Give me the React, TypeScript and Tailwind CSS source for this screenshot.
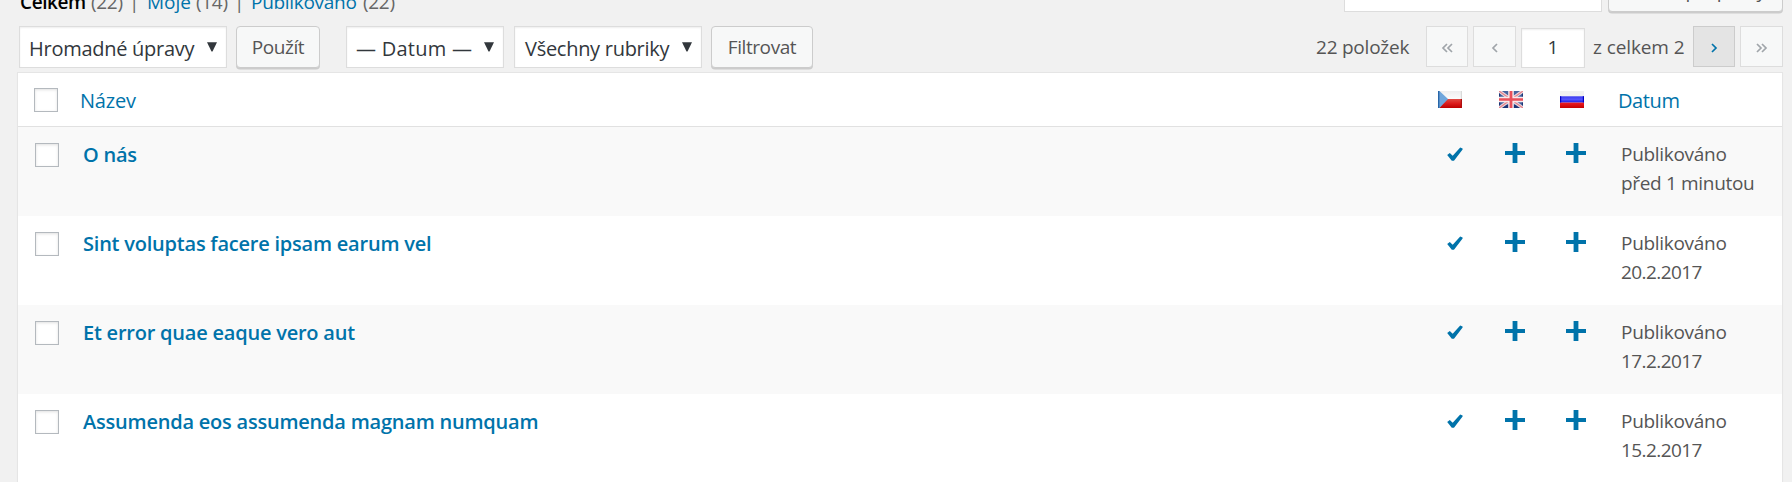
import type { ReactNode } from "react";

const rows = [
  { title: "O nás", date: "před 1 minutou", spacing: "tracking-[-0.33px]" },
  { title: "Sint voluptas facere ipsam earum vel", date: "20.2.2017", spacing: "tracking-[-0.58px]" },
  { title: "Et error quae eaque vero aut", date: "17.2.2017", spacing: "tracking-[-0.58px]" },
  { title: "Assumenda eos assumenda magnam numquam", date: "15.2.2017", spacing: "tracking-[-0.58px]" },
];

function Select({ className, children }: { className: string; children: ReactNode }) {
  return (
    <div className={`flex h-[42px] shrink-0 items-center justify-between border border-[#ddd] bg-white pr-[9px] text-[20px] text-[#32373c] shadow-[inset_0_1px_2px_rgba(0,0,0,0.07)] ${className}`}>
      <span className="whitespace-nowrap pt-[4px] leading-[36px]">{children}</span>
      <svg width="10" height="10" viewBox="0 0 10 10" className="mb-px shrink-0" fill="#32373c">
        <path d="M0 0.3H10L5.5 9.5H4.5Z" />
      </svg>
    </div>
  );
}

function Button({ className, children }: { className: string; children: ReactNode }) {
  return (
    <button className={`flex h-[42px] shrink-0 items-center justify-center whitespace-nowrap rounded-[4px] border border-[#ccc] bg-[#f7f8f8] text-[19px] text-[#555] shadow-[0_1.5px_0_#ccc] ${className}`}>
      {children}
    </button>
  );
}

function PageLink({ className, d, active }: { className: string; d: string; active?: boolean }) {
  return (
    <span className={`flex h-[41px] shrink-0 items-center justify-center border ${active ? "border-[#ccc] bg-[#e4e4e4] text-[#0073aa]" : "border-[#ddd] bg-[#f7f8f8] text-[#a0a5aa]"} ${className}`}>
      <svg width="12" height="12" viewBox="0 0 12 12" className="mt-[3px]" fill="none" stroke="currentColor" strokeWidth="1.7">
        <path d={d} />
      </svg>
    </span>
  );
}

function Checkbox() {
  return <span className="block h-[24px] w-[24px] shrink-0 border border-[#b4b9be] bg-white shadow-[inset_0_1px_3px_rgba(0,0,0,0.12)]" />;
}

function Check() {
  return (
    <svg width="16" height="15" viewBox="0 0 16 15" fill="#0073aa">
      <path d="M0.2 7.9L2.8 6L5.7 8.7L13.2 0.5L15.6 1.6V2.6L7 13.8H4.8Z" />
    </svg>
  );
}

function Plus() {
  return (
    <svg width="20" height="20" viewBox="0 0 20 20" fill="#0073aa">
      <path d="M7.6 0H12.4V8H20V12H12.4V20H7.6V12H0V8H7.6Z" />
    </svg>
  );
}

function CzechFlag() {
  return (
    <svg width="24" height="17" viewBox="0 0 24 17">
      <defs>
        <linearGradient id="cz-w" x2="0" y2="1"><stop stopColor="#eee" /><stop offset="1" stopColor="#fcfcfc" /></linearGradient>
        <linearGradient id="cz-r" x2="0" y2="1"><stop stopColor="#e04a43" /><stop offset="0.5" stopColor="#dc1c1c" /><stop offset="1" stopColor="#bd0000" /></linearGradient>
      </defs>
      <path fill="url(#cz-w)" d="M0 0H24V8H0Z" />
      <path fill="url(#cz-r)" d="M0 8H24V17H0Z" />
      <path fill="#6fa6dc" d="M0 0H1.5L10 8L1.5 17H0Z" />
      <path fill="#2866a8" d="M0 0H1.4V17H0Z" />
      <path fill="#d9dada" d="M22.8 0H24V8H22.8Z" />
      <path fill="#ad1010" d="M22.8 8H24V17H22.8Z" />
    </svg>
  );
}

function BritishFlag() {
  return (
    <svg width="24" height="17" viewBox="0 0 24 17">
      <path fill="#46649f" d="M0 0H24V17H0Z" />
      <path fill="#1c3576" d="M0 14H24V17H0ZM0 0H1.2V17H0ZM22.8 0H24V17H22.8Z" />
      <path stroke="#ead9df" strokeWidth="3.4" d="M0 0L24 17M24 0L0 17" />
      <path stroke="#e5828a" strokeWidth="1.2" d="M0 0L24 17M24 0L0 17" />
      <path fill="#f8eaec" d="M9.2 0H14.8V17H9.2ZM0 5.8H24V11.2H0Z" />
      <path fill="#e9505a" d="M10.6 0H13.4V17H10.6ZM0 7.2H24V9.8H0Z" />
    </svg>
  );
}

function RussianFlag() {
  return (
    <svg width="24" height="17" viewBox="0 0 24 17">
      <defs>
        <linearGradient id="ru-b" x2="0" y2="1"><stop stopColor="#3a3af0" /><stop offset="0.5" stopColor="#5454fb" /><stop offset="1" stopColor="#1818e6" /></linearGradient>
        <linearGradient id="ru-r" x2="0" y2="1"><stop stopColor="#ee1c24" /><stop offset="1" stopColor="#c60000" /></linearGradient>
      </defs>
      <path fill="#f1f1f1" d="M0 0H24V6H0Z" />
      <path fill="url(#ru-b)" d="M0 5.3H24V11.6H0Z" />
      <path fill="url(#ru-r)" d="M0 11.6H24V17H0Z" />
      <path fill="#0000c4" d="M0 5.3H1.2V11.6H0ZM22.8 5.3H24V11.6H22.8Z" />
    </svg>
  );
}

export default function App() {
  return (
    <div className="flex h-[482px] w-[1792px] flex-col overflow-hidden bg-[#f1f1f1] pl-[17px] pr-[9px] font-['Open_Sans','Noto_Sans',sans-serif] text-[19px] text-[#555]">
      <div className="flex h-[26px] shrink-0 justify-between">
        <nav className="-mt-[13px] flex h-[30px] pl-[3px] leading-[30px] tracking-[-0.3px] text-[#666]">
          <span className="w-[71px] font-semibold tracking-[-0.4px] text-black">Celkem</span>
          <span className="w-[38px]">(22)</span>
          <span className="w-[18px]">|</span>
          <span className="w-[49px] tracking-normal text-[#0073aa]">Moje</span>
          <span className="w-[38px]">(14)</span>
          <span className="w-[17px]">|</span>
          <span className="w-[112px] text-[#0073aa]">Publikováno</span>
          <span>(22)</span>
        </nav>
        <div className="flex gap-[6px]">
          <div className="-mt-[30px] h-[42px] w-[258px] border border-[#ddd] bg-white" />
          <Button className="-mt-[30px] w-[175px] tracking-[-0.5px]">Hledat příspěvky</Button>
        </div>
      </div>

      <div className="flex h-[46px] shrink-0 items-start pl-[2px]">
        <Select className="w-[208px] pl-[9px] tracking-[-0.27px]">Hromadné úpravy</Select>
        <Button className="ml-[9px] w-[84px] tracking-[-0.44px]">Použít</Button>
        <Select className="ml-[26px] w-[158px] pl-[9px] tracking-[0.25px]">— Datum —</Select>
        <Select className="ml-[10px] w-[188px] pl-[10px] tracking-[-0.28px]">Všechny rubriky</Select>
        <Button className="ml-[9px] w-[102px] tracking-[-0.42px]">Filtrovat</Button>
        <div className="ml-auto flex">
          <span className="w-[110px] leading-[42px] tracking-[-0.23px]">22 položek</span>
          <PageLink className="w-[42px]" d="M6 2L2 6L6 10M11 2L7 6L11 10" />
          <PageLink className="ml-[5px] w-[43px]" d="M8 2L4 6L8 10" />
          <span className="ml-[5px] mt-[2px] flex h-[40px] w-[64px] items-center justify-center border border-[#ddd] bg-white pb-px text-[#32373c] shadow-[inset_0_1px_2px_rgba(0,0,0,0.07)]">1</span>
          <span className="ml-[8px] w-[100px] leading-[42px] tracking-[-0.1px]">z celkem 2</span>
          <PageLink className="w-[42px]" d="M4 2L8 6L4 10" active />
          <PageLink className="ml-[5px] w-[43px]" d="M1 2L5 6L1 10M6 2L10 6L6 10" />
        </div>
      </div>

      <div className="h-[440px] shrink-0 border border-[#e5e5e5] bg-white shadow-[0_1px_1px_rgba(0,0,0,0.04)]">
        <div className="flex h-[54px] border-b border-[#e1e1e1] text-[20px] text-[#0073aa]">
          <div className="w-[62px] pl-[16px] pt-[15px]"><Checkbox /></div>
          <div className="flex-1 leading-[56px] tracking-[-0.2px]">Název</div>
          <div className="flex w-[180px] gap-[37px] pt-[18px]"><CzechFlag /><BritishFlag /><RussianFlag /></div>
          <div className="w-[164px] leading-[56px] tracking-[-0.4px]">Datum</div>
        </div>
        {rows.map((row) => (
          <div key={row.title} className="flex h-[89px] odd:bg-white even:bg-[#f9f9f9]">
            <div className="w-[65px] pl-[17px] pt-[16px]"><Checkbox /></div>
            <div className="flex-1 pt-[13px] text-[20px] font-semibold leading-[29px] tracking-[-0.22px] text-[#0073aa]">{row.title}</div>
            <div className="flex w-[174px] items-start">
              <span className="w-[58px] pt-[20px]"><Check /></span>
              <span className="w-[61px] pt-[16px]"><Plus /></span>
              <span className="pt-[16px]"><Plus /></span>
            </div>
            <div className="w-[161px] pt-[13px] leading-[29px]">
              <div className="tracking-[-0.3px]">Publikováno</div>
              <div className={row.spacing}>{row.date}</div>
            </div>
          </div>
        ))}
      </div>
    </div>
  );
}
